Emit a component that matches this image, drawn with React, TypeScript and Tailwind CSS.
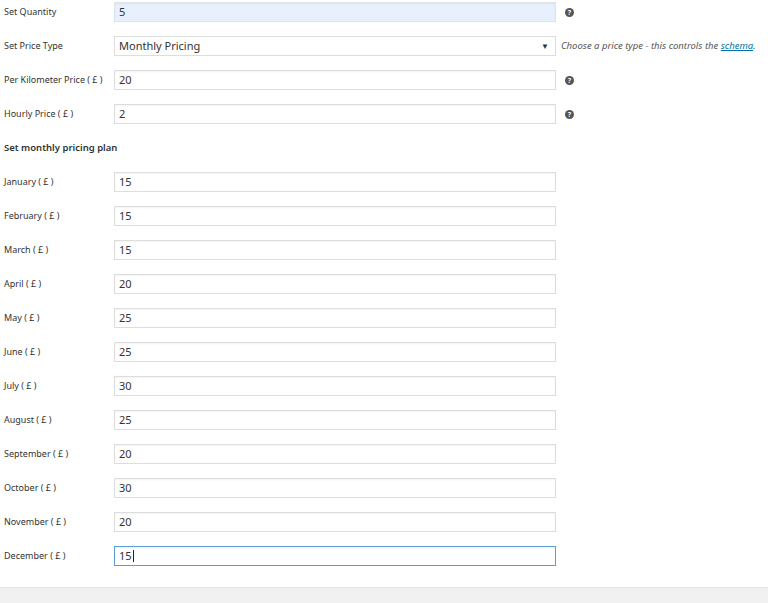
const months: [string, string][] = [
  ["January", "15"], ["February", "15"], ["March", "15"], ["April", "20"],
  ["May", "25"], ["June", "25"], ["July", "30"], ["August", "25"],
  ["September", "20"], ["October", "30"], ["November", "20"], ["December", "15"],
];

function Help() {
  return (
    <span className="ml-[9px] flex h-[9px] w-[9px] items-center justify-center rounded-full bg-[#555] text-[7px] font-bold leading-none text-white">?</span>
  );
}

function Row({ label, value, children, className = "", caret = false }: { label: string; value: string; children?: React.ReactNode; className?: string; caret?: boolean }) {
  return (
    <div className="flex h-[20px] items-center">
      <div className="w-[114px] pl-[4px] text-[9px] text-[#333]">{label}</div>
      <div className={`flex h-[20px] w-[442px] items-center border px-[4px] text-[11px] text-[#333] shadow-[inset_0_1px_2px_rgba(0,0,0,0.05)] ${className || "border-[#ddd] bg-white"}`}>
        {value}
        {caret && <span className="ml-[1px] h-[12px] w-px bg-[#222]" />}
      </div>
      {children}
    </div>
  );
}

export default function App() {
  return (
    <div className="flex h-[603px] w-[768px] flex-col bg-white font-['Open_Sans',sans-serif]">
      <div className="flex flex-1 flex-col gap-[14px] pt-[2px]">
        <Row label="Set Quantity" value="5" className="border-[#dde3ea] bg-[#e8f0fe]"><Help /></Row>
        <div className="flex h-[20px] items-center">
          <div className="w-[114px] pl-[4px] text-[9px] text-[#333]">Set Price Type</div>
          <div className="flex h-[20px] w-[442px] items-center justify-between border border-[#ddd] bg-white px-[4px] text-[11px] text-[#333]">
            Monthly Pricing<span className="pr-[2px] text-[8px]">▼</span>
          </div>
          <span className="ml-[5px] text-[9.5px] italic text-[#555]">Choose a price type - this controls the <span className="text-[#0073aa] underline">schema</span>.</span>
        </div>
        <Row label="Per Kilometer Price ( £ )" value="20"><Help /></Row>
        <Row label="Hourly Price ( £ )" value="2"><Help /></Row>
        <div className="flex h-[20px] items-center pl-[4px] text-[9.5px] font-semibold text-[#333]">Set monthly pricing plan</div>
        {months.map(([m, v]) => (
          <Row key={m} label={`${m} ( £ )`} value={v} caret={m === "December"} className={m === "December" ? "border-[#5b9dd9] bg-white shadow-[0_0_2px_rgba(30,140,190,0.8)]" : ""} />
        ))}
      </div>
      <div className="h-[16px] border-t border-[#e5e5e5] bg-[#f1f1f1]" />
    </div>
  );
}
